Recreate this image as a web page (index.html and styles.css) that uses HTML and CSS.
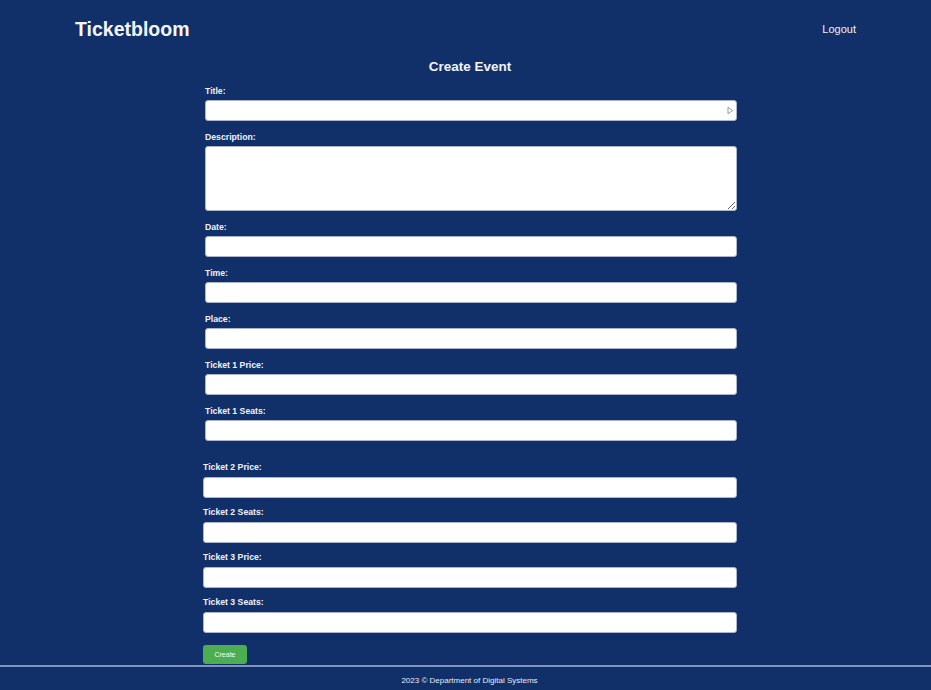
FILE: index.html
```html
<!DOCTYPE html>
<html lang="en">
<head>
<meta charset="utf-8">
<title>Ticketbloom - Create Event</title>
<link rel="stylesheet" href="styles.css">
</head>
<body>
<header class="header">
  <div class="brand">Ticketbloom</div>
  <a class="logout" href="#">Logout</a>
</header>
<main class="main">
  <form class="form">
    <h2 class="heading">Create Event</h2>
    <div class="group group-a">
      <div class="field">
        <label class="label">Title:</label>
        <div class="input-wrap">
          <input class="input" type="text">
          <svg class="autofill" width="7" height="9" viewBox="0 0 7 9"><path d="M1 1.2 L5.6 4.5 L1 7.8 Z" fill="none" stroke="#9a9a9a" stroke-width="1" stroke-linejoin="round"/></svg>
        </div>
      </div>
      <div class="field">
        <label class="label">Description:</label>
        <textarea class="input textarea"></textarea>
      </div>
      <div class="field">
        <label class="label">Date:</label>
        <input class="input" type="text">
      </div>
      <div class="field">
        <label class="label">Time:</label>
        <input class="input" type="text">
      </div>
      <div class="field">
        <label class="label">Place:</label>
        <input class="input" type="text">
      </div>
      <div class="field">
        <label class="label">Ticket 1 Price:</label>
        <input class="input" type="text">
      </div>
      <div class="field">
        <label class="label">Ticket 1 Seats:</label>
        <input class="input" type="text">
      </div>
    </div>
    <div class="group group-b">
      <div class="field">
        <label class="label">Ticket 2 Price:</label>
        <input class="input" type="text">
      </div>
      <div class="field">
        <label class="label">Ticket 2 Seats:</label>
        <input class="input" type="text">
      </div>
      <div class="field">
        <label class="label">Ticket 3 Price:</label>
        <input class="input" type="text">
      </div>
      <div class="field">
        <label class="label">Ticket 3 Seats:</label>
        <input class="input" type="text">
      </div>
    </div>
    <button class="create" type="button">Create</button>
  </form>
</main>
<footer class="footer">2023 © Department of Digital Systems</footer>
</body>
</html>
```

FILE: styles.css
```css
* { box-sizing: border-box; }
html, body { margin: 0; padding: 0; }
body {
  background: #112f69;
  color: #ffffff;
  font-family: "Liberation Sans", Arial, sans-serif;
  min-height: 690px;
}
.header {
  height: 58px;
  margin: 0 75px;
  display: flex;
  align-items: center;
  justify-content: space-between;
}
.brand {
  font-size: 19.5px;
  font-weight: bold;
  color: #f4f6fb;
}
.logout {
  font-size: 11px;
  color: #eef1f8;
  text-decoration: none;
}
.main {
  display: flex;
  justify-content: center;
  padding-left: 9px;
}
.form {
  width: 534px;
  display: flex;
  flex-direction: column;
}
.heading {
  margin: 1px 0 11px;
  font-size: 13.5px;
  line-height: 16px;
  text-align: center;
  font-weight: bold;
  color: #f2f4fa;
}
.group-a { margin-left: 2px; }
.group-b { margin-top: 10px; }
.field {
  display: flex;
  flex-direction: column;
  margin-bottom: 11px;
}
.group-b .field { margin-bottom: 9px; }
.group-b .field:last-child { margin-bottom: 8px; }
.label {
  font-size: 8.7px;
  line-height: 11px;
  font-weight: bold;
  margin-bottom: 3px;
  color: #f1f3f8;
}
.group-b .label { margin-bottom: 4px; }
.input-wrap { position: relative; }
.input {
  display: block;
  width: 100%;
  height: 21px;
  margin: 0;
  padding: 2px 4px;
  background: #ffffff;
  border: 1px solid #aab4cc;
  border-radius: 3px;
  font-family: "Liberation Sans", Arial, sans-serif;
  font-size: 9px;
}
.textarea {
  height: 65px;
  resize: vertical;
}
.autofill {
  position: absolute;
  right: 3px;
  top: 6px;
}
.create {
  align-self: flex-start;
  margin-top: 4px;
  width: 44px;
  height: 19px;
  padding: 0;
  background: #4cae50;
  border: none;
  border-radius: 3px;
  color: #f4fbf4;
  font-family: "Liberation Sans", Arial, sans-serif;
  font-size: 7px;
}
.footer {
  margin-top: 1px;
  border-top: 2px solid #8094bf;
  padding: 9px 0 10px 8px;
  font-size: 8px;
  line-height: 10px;
  text-align: center;
  color: #e8ecf5;
}
```
